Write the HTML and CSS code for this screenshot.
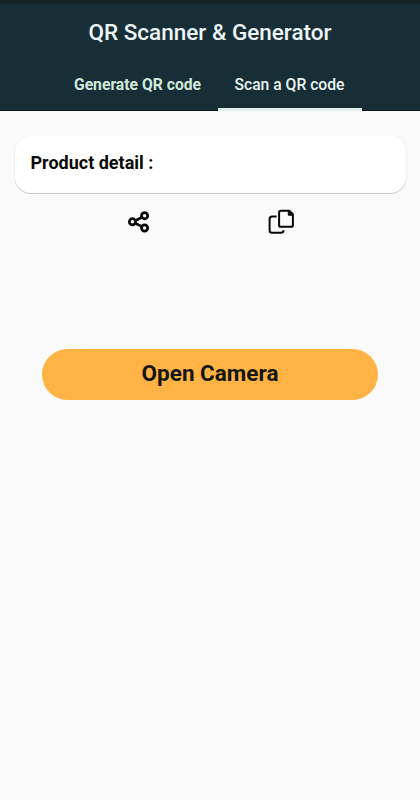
FILE: index.html
```html
<!DOCTYPE html>
<html lang="en">
<head>
<meta charset="utf-8">
<title>QR Scanner &amp; Generator</title>
<link rel="stylesheet" href="styles.css">
</head>
<body>
<header class="app-bar">
  <h1 class="title">QR Scanner &amp; Generator</h1>
  <nav class="tabs">
    <a class="tab tab-wide">Generate QR code</a>
    <a class="tab tab-active">Scan a QR code</a>
  </nav>
</header>
<main class="content">
  <section class="detail">Product detail :</section>
  <div class="actions">
    <svg class="icon" viewBox="0 0 28 28" fill="none" stroke="#080808" stroke-width="2.7">
      <path d="M10.2 12.7 16.6 9.5M10.2 15.2 16.6 18.4"/>
      <circle cx="7.4" cy="13.8" r="3.1"/>
      <circle cx="19.6" cy="7.7" r="3.1"/>
      <circle cx="19.6" cy="20" r="3.1"/>
    </svg>
    <svg class="icon" viewBox="0 0 28 28" fill="none" stroke="#080808" stroke-width="2" stroke-linejoin="round">
      <path d="M9.6 8.6H5.2Q2.6 8.6 2.6 11.2V22.2Q2.6 24.8 5.2 24.8H13.9Q16.5 24.8 16.5 22.2"/>
      <path d="M13.9 2.7H22.3L25.9 6.3V17.2Q25.9 18.8 24.3 18.8H13.9Q12.1 18.8 12.1 17.2V4.4Q12.1 2.7 13.9 2.7Z"/>
      <path d="M21.3 2.7V7.2H25.9Z" fill="#080808" stroke-width="1"/>
    </svg>
  </div>
  <button class="camera">Open Camera</button>
</main>
</body>
</html>
```
FILE: styles.css
```css
* { box-sizing: border-box; }
body {
  margin: 0;
  min-height: 800px;
  background: #fafafa;
  font-family: Roboto, sans-serif;
}
.app-bar {
  height: 111px;
  background: linear-gradient(#0c1a1f, #0c1a1f) bottom / 100% 1px no-repeat #182e36;
  border-top: 4px solid #14232a;
  display: flex;
  flex-direction: column;
}
.title {
  margin: 14px 0 0;
  height: 28px;
  line-height: 28px;
  font-size: 22.5px;
  font-weight: 500;
  color: #eef6fb;
  text-align: center;
  white-space: nowrap;
}
.tabs {
  display: flex;
  justify-content: center;
  margin-top: 12px;
  height: 53px;
}
.tab {
  flex: none;
  width: 144px;
  padding-right: 1px;
  line-height: 53px;
  font-size: 15.7px;
  font-weight: 500;
  text-align: center;
  white-space: nowrap;
}
.tab-wide {
  width: 160px;
  font-weight: 700;
  color: #cfe9dc;
}
.tab-active {
  color: #e8f5f4;
  border-bottom: 3px solid #e1eee9;
}
.content {
  display: flex;
  flex-direction: column;
  padding: 25px 14.5px 0;
}
.detail {
  height: 57px;
  padding-left: 16px;
  line-height: 53px;
  border-radius: 16px;
  background: #fff;
  box-shadow: 0 1px 1px #c8c8c8, 0 0 2px #f0f0f0;
  font-size: 18px;
  font-weight: 700;
  color: #080808;
}
.actions {
  display: flex;
  justify-content: center;
  gap: 114px;
  align-items: center;
  height: 52px;
  margin: 1px 5px 0;
  padding-top: 4px;
  border-radius: 0 0 18px 18px;
  background: #fbfbfb;
}
.icon { width: 28px; height: 28px; }
.icon:first-child { margin-left: -1px; }
.camera {
  height: 51px;
  margin: 102.5px 27.5px 0;
  padding: 0 0 2px;
  border: 0;
  border-radius: 26px;
  background: #ffb345;
  font: 700 22.5px/49px Roboto, sans-serif;
  color: #14150f;
}
```
